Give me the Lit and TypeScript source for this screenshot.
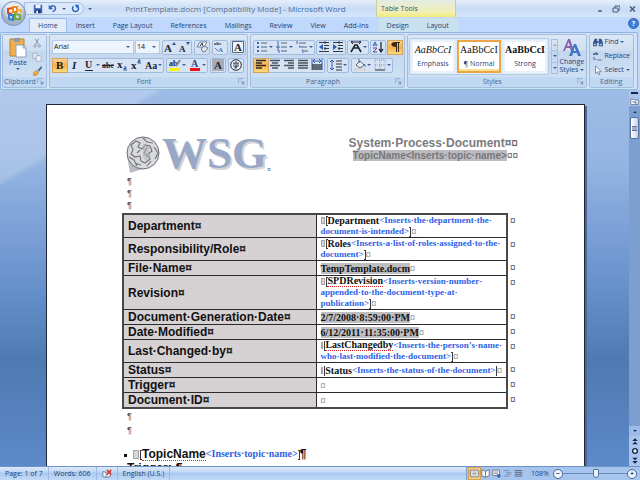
import { LitElement, html, css, svg, nothing, TemplateResult } from "lit";
import { customElement, property, state } from "lit/decorators.js";
import { classMap } from "lit/directives/class-map.js";

/* Icons share a 12 x 12 grid unless a size is given. */
const lines = (rows: number[][], c = "#33373f", w = 1) =>
  rows.map(([x1, y, x2]) => svg`<path d="M${x1} ${y}H${x2}" stroke=${c} stroke-width=${w} />`);

const glyph = (t: string, x: number, y: number, size: number, fill = "#1d2536", extra = "") =>
  svg`<text x=${x} y=${y} font-size=${size} fill=${fill} font-weight="bold" font-family="Liberation Serif, serif" style=${extra}>${t}</text>`;

const icons: Record<string, unknown> = {
  save: svg`<path d="M1 1h10v10H1z" fill="#3f5fb8"/><path d="M3 1h6v4H3z" fill="#eef4ff"/><path d="M3 7h6v4H3z" fill="#1f3474"/><path d="M4 8h2v3H4z" fill="#fff"/>`,
  undo: svg`<path d="M3 5C5 1 10 2 10 6c0 2-2 4-4 4" fill="none" stroke="#2f63b8" stroke-width="2"/><path d="M1 1v6h6z" fill="#2f63b8"/>`,
  redo: svg`<path d="M3 3C1 6 2 10 6 10s5-4 3-7" fill="none" stroke="#2b66c0" stroke-width="2"/><path d="M5 1h6L8 6z" fill="#2b66c0"/>`,
  cut: svg`<path d="M4 1l4 7M8 1L4 8" stroke="#8797b0" stroke-width="1.2"/><circle cx="3.500" cy="9.500" r="1.500" fill="none" stroke="#8797b0"/><circle cx="8.500" cy="9.500" r="1.500" fill="none" stroke="#8797b0"/>`,
  copy: svg`<path d="M1 1.500h5l1 1v5H1z" fill="#e4ebf5" stroke="#9aabc5"/><path d="M5 4.500h5l1 1v5.500H5z" fill="#edf2f9" stroke="#9aabc5"/>`,
  brush: svg`<path d="M11 0L7 5l1.500 1.500L12 2z" fill="#46638e"/><path d="M6 4l3 3-2 1-2-2z" fill="#a8b6c8"/><path d="M5 5l3 3-3 4-4-1 2-1-2-1z" fill="#e9ab43" stroke="#a9752a" stroke-width=".5"/>`,
  grow: svg`${glyph("A", 0, 11, 11)}<path d="M8 4l2-3 2 3z" fill="#2c569a"/>`,
  shrink: svg`${glyph("A", 1, 11, 9)}<path d="M8 1h4l-2 3z" fill="#2c569a"/>`,
  clear: svg`<path d="M1 6l3-5h7L8 6z" fill="#fff" stroke="#6e7c95"/><path d="M4 5l2-3 1 3" fill="none" stroke="#222a38"/><path d="M5 8l3-3 4 2-3 4H7z" fill="#dbe3f0" stroke="#6e7c95"/>`,
  phonetic: svg`${glyph("abc", 0, 4, 5)}${glyph("A", 4, 11, 7, "#4177c4")}<path d="M1 7l3 3" stroke="#6d7b92"/>`,
  boxed: svg`<path d="M.5.5h11v11H.5z" fill="#eef3fa" stroke="#59657b"/>${glyph("A", 2, 10, 11)}`,
  bold: glyph("B", 2, 10, 11, "#20170a"),
  italic: glyph("I", 4, 10, 11, "#1d2536", "font-style:italic"),
  underline: svg`${glyph("U", 2, 9, 10)}<path d="M2 11.500h8" stroke="#1d2536"/>`,
  strike: svg`${glyph("abc", 0, 9, 8)}<path d="M0 6.500h12" stroke="#1d2536"/>`,
  sub: svg`${glyph("x", 1, 9, 11)}<path d="M8 8h2v1.500H8V11h3" fill="none" stroke="#2c569a"/>`,
  sup: svg`${glyph("x", 1, 10, 11)}<path d="M8 1h2v1.500H8V4h3" fill="none" stroke="#2c569a"/>`,
  aa: glyph("Aa", 0, 10, 10),
  highlight: svg`${glyph("ab", 0, 7, 8)}<path d="M11 1L7 7" stroke="#7d8798" stroke-width="2"/><path d="M1 9h10v3H1z" fill="#fbf304"/>`,
  color: svg`${glyph("A", 2, 8, 10, "#2c4a86")}<path d="M1 9h10v3H1z" fill="#ee1111"/>`,
  shade: svg`<path d="M0 0h12v12H0z" fill="#a9adb3"/>${glyph("A", 2, 10, 11)}`,
  enclose: svg`<circle cx="6" cy="6" r="5.300" fill="#f0f4fa" stroke="#222a38"/><path d="M3 4h6M6 2v8M3 7h6M4 4v2M8 4v2M4 9l4-2" stroke="#222a38" stroke-width=".8" fill="none"/>`,
  bullets: svg`<path d="M1 1h2v2H1zM1 5h2v2H1zM1 9h2v2H1z" fill="#3c66ae"/>${lines([[5, 2, 11], [5, 6, 11], [5, 10, 11]], "#5a6474")}`,
  numbering: svg`<path d="M2 0v4M1 5h2v2H1zM1 9h2v3" stroke="#3c66ae" fill="none"/>${lines([[5, 2, 11], [5, 6, 11], [5, 10, 11]], "#5a6474")}`,
  multi: svg`<path d="M1 0v3M3 5h1v2M6 9h1v3" stroke="#3c66ae" fill="none"/>${lines([[3, 2, 10], [5, 6, 11], [8, 10, 12]], "#5a6474")}`,
  outdent: svg`${lines([[1, 1.5, 11], [6, 4.5, 11], [6, 7.5, 11], [1, 10.5, 11]])}<path d="M5 3v6L1 6z" fill="#2e5eae"/><path d="M7 0v12" stroke="#444" stroke-dasharray="1 1"/>`,
  indent: svg`${lines([[1, 1.5, 11], [6, 4.5, 11], [6, 7.5, 11], [1, 10.5, 11]])}<path d="M1 3v6l4-3z" fill="#2e5eae"/><path d="M7 0v12" stroke="#444" stroke-dasharray="1 1"/>`,
  asian: svg`<path d="M1 11l4-7h2l4 7M3 7h6" fill="none" stroke="#20242d" stroke-width="1.600"/><path d="M1 1h10M3 0L1 1l2 2M9 0l2 1-2 2" fill="none" stroke="#20242d"/>`,
  sort: svg`<path d="M1 5l2-4 2 4M2 4h2" stroke="#2e5eae" fill="none"/><path d="M1 7h4l-4 4h4" stroke="#6b3f8f" fill="none"/><path d="M9 1v9M7 8l2 3 2-3" fill="none" stroke="#222a38" stroke-width="1.300"/>`,
  pilcrow: svg`<path d="M6 1h5v1h-1v9H9V2H8v9H7V6C1 6 1 1 6 1z" fill="#3a2a10"/>`,
  left: lines([[1, 1.5, 11], [1, 4, 7], [1, 6.5, 11], [1, 9, 7]], "#2e2a28", 1.6),
  center: lines([[1, 1.5, 11], [3, 4, 9], [1, 6.5, 11], [3, 9, 9]], "#4b535f", 1.6),
  right: lines([[1, 1.5, 11], [5, 4, 11], [1, 6.5, 11], [5, 9, 11]], "#4b535f", 1.6),
  justify: lines([[1, 1.5, 11], [1, 4, 11], [1, 6.5, 11], [1, 9, 11]], "#4b535f", 1.6),
  distribute: svg`<path d="M1 0v11M11 0v11M2 2h8M4 0L2 2l2 2M8 0l2 2-2 2" stroke="#2e5eae" fill="none"/>${lines([[1, 6, 11], [1, 8, 11], [1, 10, 11]], "#3b424e", 1.3)}`,
  spacing: svg`<path d="M2 1v10M0 3l2-2 2 2M0 9l2 2 2-2" stroke="#2e5eae" fill="none"/>${lines([[6, 2, 12], [6, 5, 12], [6, 8, 12], [6, 11, 12]])}`,
  bucket: svg`<path d="M2 6l4-4 4 4-4 3z" fill="#eef2f8" stroke="#5a6474"/><path d="M5 4V0M10 5c2 1 1 3 1 3" stroke="#3c66ae" fill="none"/><path d="M1 10h10v2H1z" fill="#f5efe0" stroke="#b9a" stroke-width=".5"/>`,
  borders: svg`<path d="M1 1h10v10M1 1v10M6 1v10M1 6h10" stroke="#8d9bb0" fill="none" stroke-dasharray="1 1"/><path d="M1 11h10" stroke="#222a38"/>`,
  find: svg`<path d="M2 2h3v3h2V2h3l2 5v4H7V7H5v4H0V7z" fill="#35578f"/><path d="M1 8h3v2H1zM8 8h3v2H8z" fill="#a9c2ea"/>`,
  replace: svg`${glyph("ab", 0, 5, 6)}${glyph("ac", 5, 12, 6, "#6a7fa5")}<path d="M1 7v3h3" stroke="#3c66ae" fill="none"/>`,
  select: svg`<path d="M3 1v9l2-2 2 4 1-1-1-3h3z" fill="#fff" stroke="#6a7da0"/>`,
  ruler: svg`<path d="M1 3h4l1 1h5v6H1z" fill="#f3f6fb" stroke="#5a6a85"/><path d="M3 6l6 2M7 5v4" stroke="#5a6a85"/>`,
  proof: svg`<path d="M1 3l4 1 5-1v6l-5 1-4-1z" fill="#f6f7fa" stroke="#66758f"/><path d="M5 4v6" stroke="#66758f"/><path d="M6 1l5 6M11 1L6 7" stroke="#df3326" stroke-width="1.800"/>`,
  print: svg`<path d="M1 1.500h10v9H1z" fill="#fff" stroke="#5d6470"/>${lines([[3, 4, 9], [3, 6, 9], [3, 8, 9]], "#777f8c")}`,
  reading: svg`<path d="M6 3L1 1v8l5 2 5-2V1z" fill="#f8fafc" stroke="#515c6e"/><path d="M6 3v8" stroke="#515c6e"/>`,
  web: svg`<path d="M1 1.500h9v7H1z" fill="#f8fafc" stroke="#5d6470"/>${lines([[3, 4, 8], [3, 6, 8]], "#777f8c")}<circle cx="9" cy="9" r="2.500" fill="#3868b4"/>`,
  outline: lines([[1, 2, 8], [4, 4.5, 11], [4, 7, 11], [1, 9.5, 8]], "#76839a"),
  draft: lines([[1, 2, 11], [1, 4.5, 11], [1, 7, 11], [1, 9.5, 11]], "#66738a", 1.5),
  pageUp: svg`<path d="M2 6l4-4 4 4zM2 11l4-4 4 4z" fill="#15233c"/>`,
  pageDown: svg`<path d="M2 1h8L6 5zM2 6h8l-4 4z" fill="#15233c"/>`,
  ring: svg`<circle cx="6" cy="6" r="3.500" fill="#e9f1fc" stroke="#15233c" stroke-width="2"/>`,
  launcher: svg`<path d="M1 9V1h8" fill="none" stroke="#6f8fbd"/><path d="M5 5l5 5M10 6v4H6" fill="none" stroke="#5577ab" stroke-width="1.200"/>`,
};

const icon = (name: string, size = 12) =>
  html`<svg width=${size} height=${size} viewBox="0 0 12 12" aria-hidden="true">${icons[name]}</svg>`;

interface Tool { id: string; menu?: boolean; on?: boolean; }
const t = (id: string, menu = false, on = false): Tool => ({ id, menu, on });

const fontTop: Tool[][] = [[t("grow"), t("shrink")], [t("clear")], [t("phonetic")], [t("boxed")]];
const fontBottom: Tool[][] = [
  [t("bold", false, true), t("italic"), t("underline", true), t("strike"), t("sub"), t("sup"), t("aa", true)],
  [t("highlight", true), t("color", true)], [t("shade")], [t("enclose")],
];
const paraTop: Tool[][] = [
  [t("bullets", true), t("numbering", true), t("multi", true)],
  [t("outdent"), t("indent")], [t("asian", true)], [t("sort")], [t("pilcrow", false, true)],
];
const paraBottom: Tool[][] = [
  [t("left", false, true), t("center"), t("right"), t("justify"), t("distribute")],
  [t("spacing", true)], [t("bucket", true), t("borders", true)],
];

/* A value line is made of runs; the kind says how the run is painted. */
type Run = [kind: "name" | "wavy" | "hint" | "field" | "open" | "close" | "end", text?: string];
interface Row { label: string; lines: Run[][]; }

const rows: Row[] = [
  { label: "Department", lines: [
    [["open"], ["name", "Department"], ["hint", "<Inserts·the·department·the·"]],
    [["hint", "document·is·intended>"], ["close"], ["end"]]] },
  { label: "Responsibility/Role", lines: [
    [["open"], ["name", "Roles"], ["hint", "<Inserts·a·list·of·roles·assigned·to·the·"]],
    [["hint", "document>"], ["close"], ["end"]]] },
  { label: "File·Name", lines: [[["field", "TempTemplate.docm"], ["end"]]] },
  { label: "Revision", lines: [
    [["open"], ["wavy", "SPDRevision"], ["hint", "<Inserts·version·number·"]],
    [["hint", "appended·to·the·document·type·at·"]],
    [["hint", "publication>"], ["close"], ["end"]]] },
  { label: "Document·Generation·Date", lines: [[["field", "2/7/2008·8:59:00·PM"], ["end"]]] },
  { label: "Date·Modified", lines: [[["field", "6/12/2011·11:35:00·PM"], ["end"]]] },
  { label: "Last·Changed·by", lines: [
    [["open"], ["wavy", "LastChangedby"], ["hint", "<Inserts·the·person’s·name·"]],
    [["hint", "who·last·modified·the·document>"], ["close"], ["end"]]] },
  { label: "Status", lines: [[["open"], ["name", "Status"], ["hint", "<Inserts·the·status·of·the·document>"], ["close"], ["end"]]] },
  { label: "Trigger", lines: [[["end"]]] },
  { label: "Document·ID", lines: [[["end"]]] },
];

const run = ([kind, text]: Run): TemplateResult => {
  if (kind === "open") return html`<i class="tag"></i><i class="open"></i>`;
  if (kind === "close") return html`<i class="close"></i>`;
  return html`<span class=${kind}>${kind === "end" ? "¤" : text}</span>`;
};

@customElement("ribbon-group")
export class RibbonGroup extends LitElement {
  @property() label = "";
  @property({ type: Boolean }) launcher = false;

  static styles = css`
    :host {
      display: flex; flex-direction: column; box-sizing: border-box; height: 54px;
      border: 1px solid #a3bddf; border-radius: 2px; overflow: hidden;
      background: linear-gradient(#dbe7f5, #cfdff1 30%, #c3d6ed 32%, #d3e4f6);
    }
    .body { flex: 1; display: flex; min-height: 0; }
    .foot {
      height: 10px; display: flex; align-items: center; background: #c0d8f1;
      color: #41689f; font: 7px/10px "Open Sans", sans-serif;
    }
    .name { flex: 1; text-align: center; }
    button { all: unset; width: 9px; height: 8px; display: flex; }
  `;

  render() {
    return html`
      <div class="body"><slot></slot></div>
      <div class="foot"><span class="name">${this.label}</span>
        ${this.launcher ? html`<button aria-label="${this.label} options">${icon("launcher", 7)}</button>` : nothing}
      </div>`;
  }
}

@customElement("app-root")
export class AppRoot extends LitElement {
  @state() private tab = "Home";
  @state() private look = "Normal";

  static styles = css`
    :host {
      display: flex; flex-direction: column; height: 100vh; min-height: 240px; overflow: hidden;
      position: relative; background: #bfd8fb; color: #1f3f77;
      font: 7px/10px "Open Sans", "Noto Sans", sans-serif;
    }
    * { box-sizing: border-box; }
    button, select, input { font: inherit; color: inherit; margin: 0; padding: 0; border: 0; background: none; }
    button { display: flex; align-items: center; justify-content: center; }
    svg { display: block; flex: none; }
    .caret { width: 0; height: 0; flex: none; border: 2px solid transparent; border-top-color: #3d5f97; border-bottom: 0; }

    /* title bar */
    .title { height: 17px; flex: none; display: flex; background: linear-gradient(#e6effc, #c9dcf5 50%, #d5e5fa); }
    .lead { flex: none; width: 376px; display: flex; align-items: center; padding-left: 24px; }
    .quick {
      display: flex; align-items: center; gap: 5px; height: 13px; width: 60px; padding-left: 8px;
      border: 1px solid #a5bfe2; border-radius: 0 7px 7px 0; background: #dbe9fb;
    }
    .more { width: 11px; }
    .caption { flex: 1; margin: 0; text-align: center; font-size: 8px; font-weight: 400; color: #5e6f8c; white-space: nowrap; }
    .caption b { font-weight: 400; color: #3f6ba8; }
    .context {
      width: 80px; padding: 4px; color: #3a4f70; border-left: 1px solid #c9cf9b; border-right: 1px solid #c9cf9b;
      background: linear-gradient(#e3ebe6, #f0f0b4 70%, #f3ea7a);
    }
    .window { margin-left: auto; display: flex; align-items: center; gap: 4px; padding-right: 2px; }
    .window button { width: 12px; height: 12px; }
    .office { position: absolute; left: 1px; top: 1px; width: 25px; height: 25px; }

    /* tabs */
    .tabs { height: 15px; flex: none; display: flex; padding: 1px 1px 0 29px; }
    .tabs button { padding: 0 8px; border: 1px solid transparent; border-bottom: 0; border-radius: 2px 2px 0 0; }
    .tabs button.on { background: #e3edfa; border-color: #9bbce6; }
    .tabs .tint { background: #c9e0ee; }
    .tabs .help {
      margin-left: auto; width: 11px; height: 11px; padding: 0; border: 1px solid #3a67b5; border-radius: 50%;
      background: #3d7ddb; color: #fff; font-weight: 700;
    }

    /* ribbon */
    .ribbon {
      flex: none; display: flex; gap: 2px; margin: 0 2px 0 0; padding: 1px 3px 1px 1px;
      border: 1px solid #8db2e3; border-bottom-color: #86bfd6; border-radius: 2px; background: #d3e3f5;
    }
    ribbon-group { flex: none; }
    .wide { flex: 1; }
    .rows { display: flex; flex-direction: column; gap: 2px; padding: 4px 1px 0 2px; }
    .row { display: flex; gap: 2px; height: 16px; align-items: center; }
    .row.tight { gap: 1px; }
    .set { display: flex; height: 15px; border: 1px solid #a1bbdf; border-radius: 2px; background: #d5e3f4; }
    .set button { width: 14px; }
    .set .menu { width: 20px; gap: 1px; }
    .set .on, .views .on { background: linear-gradient(#fbd28e, #f7ae4c 50%, #fbdc7c); box-shadow: 0 0 0 1px #d2a35a; }
    .combo { display: flex; height: 14px; align-items: center; border: 1px solid #b4cae6; background: #eef4fc; padding: 0 3px 0 1px; }
    .combo select { appearance: none; flex: 1; min-width: 0; color: #111; }
    .face { width: 82px; }
    .size { width: 25px; }

    .clip { display: flex; padding: 2px 4px 0 6px; gap: 5px; }
    .paste { flex-direction: column; justify-content: flex-start; }
    .side { display: flex; flex-direction: column; justify-content: space-between; padding: 1px 0; }

    .gallery { flex: 1; display: flex; gap: 2px; margin: 3px 2px 2px 1px; padding: 1px; border: 1px solid #b4cae6; background: #dfeaf7; }
    .gallery button {
      flex: 1; width: 44px; flex-direction: column; gap: 3px; overflow: hidden; background: #fff; border: 2px solid #e8f0fa;
      white-space: nowrap;
    }
    .gallery button.on { border-color: #e9a546; box-shadow: inset 0 -2px #fbe28c; }
    .sample { font: 10px/12px "Liberation Serif", serif; color: #111; }
    .emphasis .sample { font-style: italic; }
    .strong .sample { font-weight: 700; }
    .scroll { display: flex; flex-direction: column; margin: 4px 0 3px; width: 8px; border: 1px solid #a8c1e2; }
    .scroll button { flex: 1; border-top: 1px solid #a8c1e2; }
    .scroll button:first-child { border-top: 0; }
    .scroll .up { transform: rotate(180deg); border-top-color: #9aa7ba; }
    .change { flex-direction: column; justify-content: flex-start; width: 32px; padding-top: 3px; line-height: 8px; }
    .change span { display: flex; align-items: center; gap: 2px; }
    .edit { display: flex; flex-direction: column; padding: 0 3px; }
    .edit button { height: 14px; gap: 2px; justify-content: flex-start; }

    /* workspace */
    .work {
      flex: 1; min-height: 0; display: flex;
      background:
        linear-gradient(to bottom right, rgba(255, 255, 255, .2) 12%, transparent 13%),
        linear-gradient(#9fbce6, #94b4e2 20%, #7fa3d8 35%, #6690ca 53%, #4f7ab1 72%, #5c8aca);
    }
    .desk { flex: 1; min-width: 0; overflow: hidden; padding: 14px 44px 0 46px; }
    .sheet {
      min-height: 100%; background: #fff; border: 1px solid #1d2739; border-bottom: 0; box-shadow: 2px 2px 0 #4c6893;
      padding: 29px 66px 0 75px; color: #111; overflow: hidden;
    }
    .rail { width: 11px; flex: none; display: flex; flex-direction: column; align-items: center; background: #a9c5ee; padding-top: 2px; }
    .split { width: 7px; height: 2px; background: #16253f; margin-bottom: 2px; }
    .rail button { width: 11px; height: 10px; }
    .track { flex: 1; align-self: stretch; background: #7c9fd0; padding-top: 1px; display: flex; flex-direction: column; align-items: center; }
    .track .arrow { border-top-color: #22375c; }
    .track .up { transform: rotate(180deg); }
    .thumb { height: 22px; width: 9px; border: 1px solid #57719c; border-radius: 2px; background: linear-gradient(90deg, #fff, #c4d3ea); display: flex; align-items: center; justify-content: center; }
    .thumb i { width: 5px; height: 5px; border: 1px solid #63779a; border-width: 1px 0; background: #9db0cf; }
    .track button:last-child { margin-top: auto; background: #9dbbe8; }
    .jump { display: flex; flex-direction: column; }

    /* document */
    .head { display: flex; justify-content: space-between; height: 41px; padding-left: 4px; }
    .logo { display: flex; align-items: flex-start; }
    .word { font: 700 45px/38px "Liberation Serif", serif; color: #98a8c6; text-shadow: 2px 2px #d3d3d6; }
    .logo .end { align-self: flex-end; }
    .topic { text-align: right; font: 700 12px/13px "Liberation Sans", sans-serif; color: #7b7b7d; padding-top: 3px; white-space: nowrap; }
    .topic p { margin: 0; }
    .topic small { font-size: 10px; line-height: 12px; display: block; }
    .topic mark { background: #bcbcc0; color: #77777b; }
    .end { font-weight: 400; color: #555; }
    th .end { font-weight: 700; color: #222; }
    .marks { padding: 0 0 0 5px; margin: 0; font: 9px/12px "Liberation Sans", sans-serif; color: #444c5c; }
    .top { height: 38px; }
    table { width: 100%; border-collapse: collapse; table-layout: fixed; }
    .labels { width: 49%; }
    .outer { width: 10px; }
    th, td { padding: 0 4px; border: 1px solid #2b2b2d; }
    th { text-align: left; background: #d6d2d4; font: 700 12px/14px "Liberation Sans", sans-serif; white-space: nowrap; border-left: 2px solid #48484a; }
    td { font: 700 10px/11px "Liberation Serif", serif; white-space: nowrap; }
    tr:first-child th, tr:first-child td.value { border-top: 2px solid #48484a; }
    tr:last-child th, tr:last-child td.value { border-bottom: 2px solid #48484a; }
    .value { border-right: 2px solid #48484a; }
    td.mark { vertical-align: top; padding: 1px 0 0 2px; border: 0; color: #4d5a70; font-weight: 400; font-family: "Liberation Sans", sans-serif; }
    .line { display: flex; }
    .hint { color: #2f62e6; font-size: 9px; }
    .field { background: #bebec1; }
    .wavy { border-bottom: 1px dotted #e02020; line-height: 10px; }
    .tag { width: 4px; height: 7px; margin: 2px 1px 0 0; border: 1px solid #a5a5a8; background: #d6d6d8; }
    .open, .close { width: 2px; height: 10px; margin-top: 1px; border: 1px solid #3c3c40; }
    .open { border-right: 0; }
    .close { border-left: 0; }
    h2 { display: flex; align-items: center; margin: 0; font: 700 12px/14px "Liberation Sans", sans-serif; white-space: nowrap; }
    h2 .wavy { line-height: 12px; }
    .bullet { width: 3px; height: 3px; margin: 3px 6px 0 2px; background: #111; }
    h2 .tag { height: 9px; width: 6px; margin: 0 1px 0 0; }
    h2 .hint { font: 700 10px/14px "Liberation Serif", serif; }
    .next { padding-left: 5px; }
    .after { line-height: 14px; height: 38px; }

    /* status bar */
    .status {
      height: 14px; flex: none; display: flex; align-items: stretch; color: #263f70; border-top: 1px solid #6f92c6;
      background: linear-gradient(#dce9fa, #c0d7f5 40%, #a9c8f1 45%, #c2daf7);
    }
    .status > span { display: flex; align-items: center; padding: 0 5px; border-right: 1px solid #9dbbe4; }
    .views { display: flex; align-items: center; margin-left: auto; padding-left: 2px; border-left: 1px solid #7ea2d6; background: #a6c5ee; }
    .views button { width: 11px; height: 11px; }
    .zoom { display: flex; align-items: center; padding: 0 3px 0 7px; background: #a6c5ee; }
    .zoom output { width: 22px; }
    .zoom button { width: 10px; height: 10px; border: 1px solid #4c678f; border-radius: 50%; background: #f1f6fd; font-weight: 700; }
    input[type="range"] { appearance: none; width: 64px; height: 11px; background: linear-gradient(#6c8cb9, #6c8cb9) center / 100% 1px no-repeat; }
    input[type="range"]::-webkit-slider-thumb { appearance: none; width: 6px; height: 9px; border: 1px solid #52709c; border-radius: 1px 1px 3px 3px; background: #e9f1fb; }
  `;

  private sets(groups: Tool[][]) {
    return html`${groups.map((g) => html`<div class="set">${g.map((b) => html`
      <button class=${classMap({ on: !!b.on, menu: !!b.menu })} aria-label=${b.id} aria-pressed=${b.on ? "true" : "false"}>
        ${icon(b.id)}${b.menu ? html`<i class="caret"></i>` : nothing}
      </button>`)}</div>`)}`;
  }

  private titleBar() {
    return html`
      <header class="title">
        <div class="lead">
          <div class="quick">
            <button aria-label="Save">${icon("save", 10)}</button>
            <button aria-label="Undo">${icon("undo", 9)}</button>
            <i class="caret"></i>
            <button aria-label="Redo">${icon("redo", 9)}</button>
          </div>
          <button class="more" aria-label="Customize toolbar"><i class="caret"></i></button>
          <h1 class="caption">PrintTemplate.docm [Compatibility Mode] - <b>Microsoft Word</b></h1>
        </div>
        <div class="context">Table Tools</div>
        <div class="window">
          <button aria-label="Minimize"><svg width="8" height="8"><path d="M2 6h4" stroke="#4a5d7d" stroke-width="1.500"/></svg></button>
          <button aria-label="Restore"><svg width="8" height="8"><path d="M1 3h5v4H1zM3 3V1h5v4H6" fill="none" stroke="#4a5d7d"/></svg></button>
          <button aria-label="Close"><svg width="8" height="8"><path d="M2 1.500l5 5M7 1.500l-5 5" stroke="#4a5d7d" stroke-width="1.500"/></svg></button>
        </div>
      </header>
      <button class="office" aria-label="Office menu">
        <svg width="25" height="25" viewBox="0 0 25 25">
          <defs><radialGradient id="orb" cy=".3"><stop offset="0" stop-color="#fff"/><stop offset=".7" stop-color="#d5dce8"/><stop offset="1" stop-color="#a3b1c9"/></radialGradient></defs>
          <circle cx="12.500" cy="12.500" r="12" fill="url(#orb)" stroke="#8193b3"/>
          <g fill="none" stroke-width="2">
            <path d="M11 7l-4 1v4l4 1" stroke="#dd4a1c"/><path d="M12 6v5h4V6z" stroke="#ee8a1d"/>
            <path d="M8 14v4l4 1v-5z" stroke="#3a7fd0"/><path d="M14 13v5h5v-4z" stroke="#74ab36"/>
            <path d="M16 9h4v3" stroke="#f2b52a"/>
          </g>
        </svg>
      </button>`;
  }

  private tabBar() {
    const names = ["Home", "Insert", "Page Layout", "References", "Mailings", "Review", "View", "Add-Ins", "Design", "Layout"];
    return html`<nav class="tabs" role="tablist">
      ${names.map((n, i) => html`<button role="tab" aria-selected=${this.tab === n}
        class=${classMap({ on: this.tab === n, tint: i > 7 })} @click=${() => (this.tab = n)}>${n}</button>`)}
      <button class="help" aria-label="Help">?</button>
    </nav>`;
  }

  private ribbon() {
    const looks = [["Emphasis", "Emphasis"], ["Normal", "¶ Normal"], ["Strong", "Strong"]];
    return html`<section class="ribbon">
      <ribbon-group label="Clipboard" launcher>
        <div class="clip">
          <button class="paste">
            <svg width="18" height="21" viewBox="0 0 18 21">
              <path d="M1 2h14v17H1z" fill="#eeb04f" stroke="#b98231"/><path d="M5 1h6v4H5z" fill="#8d99ab"/>
              <path d="M7 8h7l3 3v9H7z" fill="#fff" stroke="#8ba0bf"/><path d="M14 8v3h3" fill="none" stroke="#8ba0bf"/>
            </svg>
            <span>Paste</span><i class="caret"></i>
          </button>
          <div class="side">
            <button aria-label="Cut">${icon("cut", 10)}</button>
            <button aria-label="Copy">${icon("copy", 10)}</button>
            <button aria-label="Format painter">${icon("brush", 10)}</button>
          </div>
        </div>
      </ribbon-group>
      <ribbon-group label="Font" launcher>
        <div class="rows">
          <div class="row">
            <div class="row tight">
              <div class="combo face"><select aria-label="Font"><option>Arial</option></select><i class="caret"></i></div>
              <div class="combo size"><select aria-label="Font size"><option>14</option></select><i class="caret"></i></div>
            </div>
            ${this.sets(fontTop)}
          </div>
          <div class="row">${this.sets(fontBottom)}</div>
        </div>
      </ribbon-group>
      <ribbon-group label="Paragraph" launcher>
        <div class="rows">
          <div class="row tight">${this.sets(paraTop)}</div>
          <div class="row">${this.sets(paraBottom)}</div>
        </div>
      </ribbon-group>
      <ribbon-group class="wide" label="Styles" launcher>
        <div class="gallery">
          ${looks.map(([id, name]) => html`<button class=${classMap({ [id.toLowerCase()]: true, on: this.look === id })}
            @click=${() => (this.look = id)}><span class="sample">AaBbCcI</span><span>${name}</span></button>`)}
        </div>
        <div class="scroll">
          <button aria-label="Up"><i class="caret up"></i></button>
          <button aria-label="Down"><i class="caret"></i></button>
          <button aria-label="More"><i class="caret"></i></button>
        </div>
        <button class="change">
          <svg width="20" height="20" viewBox="0 0 20 20">
            <path d="M1 13L6 1h2l4 12H9L8 10H4l-1 3zM5 8h3L6.500 4z" fill="#8a5fae"/>
            <path d="M7 18l5-12h2l5 12h-3l-1-3h-4l-1 3zM11 13h3l-1.500-4z" fill="#3f74c4"/>
          </svg>
          <span>Change</span><span>Styles<i class="caret"></i></span>
        </button>
      </ribbon-group>
      <ribbon-group label="Editing">
        <div class="edit">
          <button>${icon("find", 10)}Find<i class="caret"></i></button>
          <button>${icon("replace", 10)}Replace</button>
          <button>${icon("select", 10)}Select<i class="caret"></i></button>
        </div>
      </ribbon-group>
    </section>`;
  }

  private sheet() {
    return html`<article class="sheet">
      <div class="head">
        <div class="logo">
          <svg width="36" height="41" viewBox="3 1 36 41">
            <path d="M4 22l3 18 19-6 3-14z" fill="#b9bcc6"/>
            <circle cx="20" cy="20" r="16" fill="#d9dadd" stroke="#6d6e73"/>
            <path d="M8 12l5-4 4 2-2 4 4 2 3-4 5 1 2 5-4 3 2 5-5 4-4-2-1-5-5 1-4-3 2-4zM20 5l4 4 6 1M6 24l5 3 3 6M28 28l-4 5M31 14l4 6-3 6M14 20l3-3M12 30l6 2M24 14l-3 6 4 4"
              fill="none" stroke="#77787d" stroke-width="1.200"/>
            <path d="M20 11l7 3-2 5 3 4-5 5-3-4z" fill="#b2b4ba" opacity=".6"/>
          </svg>
          <span class="word">WSG</span><span class="end">¤</span>
        </div>
        <div class="topic">
          <p>System·Process·Document¤<span class="end">¤</span></p>
          <small><mark>TopicName&lt;Inserts·topic·name&gt;</mark><span class="end">¤¤</span></small>
        </div>
      </div>
      <p class="marks top">¶<br>¶<br>¶</p>
      <table>
        <colgroup><col class="labels"><col><col class="outer"></colgroup>
        <tbody>${rows.map((r) => html`<tr>
          <th scope="row">${r.label}<span class="end">¤</span></th>
          <td class="value">${r.lines.map((l) => html`<div class="line">${l.map(run)}</div>`)}</td>
          <td class="mark">¤</td>
        </tr>`)}</tbody>
      </table>
      <p class="marks after">¶<br>¶</p>
      <h2><i class="bullet"></i><i class="tag"></i><i class="open"></i><span class="wavy">TopicName</span><span class="hint">&lt;Inserts·topic·name&gt;</span><i class="close"></i>¶</h2>
      <h2 class="next">Trigger:·¶</h2>
    </article>`;
  }

  render() {
    return html`
      ${this.titleBar()} ${this.tabBar()} ${this.ribbon()}
      <main class="work">
        <div class="desk">${this.sheet()}</div>
        <aside class="rail">
          <i class="split"></i>
          <button aria-label="Ruler">${icon("ruler", 9)}</button>
          <div class="track">
            <button aria-label="Scroll up"><i class="caret up arrow"></i></button>
            <div class="thumb"><i></i></div>
            <button aria-label="Scroll down"><i class="caret arrow"></i></button>
          </div>
          <div class="jump">
            <button aria-label="Previous page">${icon("pageUp", 8)}</button>
            <button aria-label="Browse object">${icon("ring", 8)}</button>
            <button aria-label="Next page">${icon("pageDown", 8)}</button>
          </div>
        </aside>
      </main>
      <footer class="status">
        <span>Page: 1 of 7</span><span>Words: 606</span><span>${icon("proof", 10)}</span><span>English (U.S.)</span>
        <div class="views">
          ${["print", "reading", "web", "outline", "draft"].map((v, i) => html`<button class=${classMap({ on: i === 0 })} aria-label=${v}>${icon(v, 9)}</button>`)}
        </div>
        <div class="zoom">
          <output>108%</output>
          <button aria-label="Zoom out">−</button>
          <input type="range" min="10" max="210" value="112" aria-label="Zoom">
          <button aria-label="Zoom in">+</button>
        </div>
      </footer>`;
  }
}
